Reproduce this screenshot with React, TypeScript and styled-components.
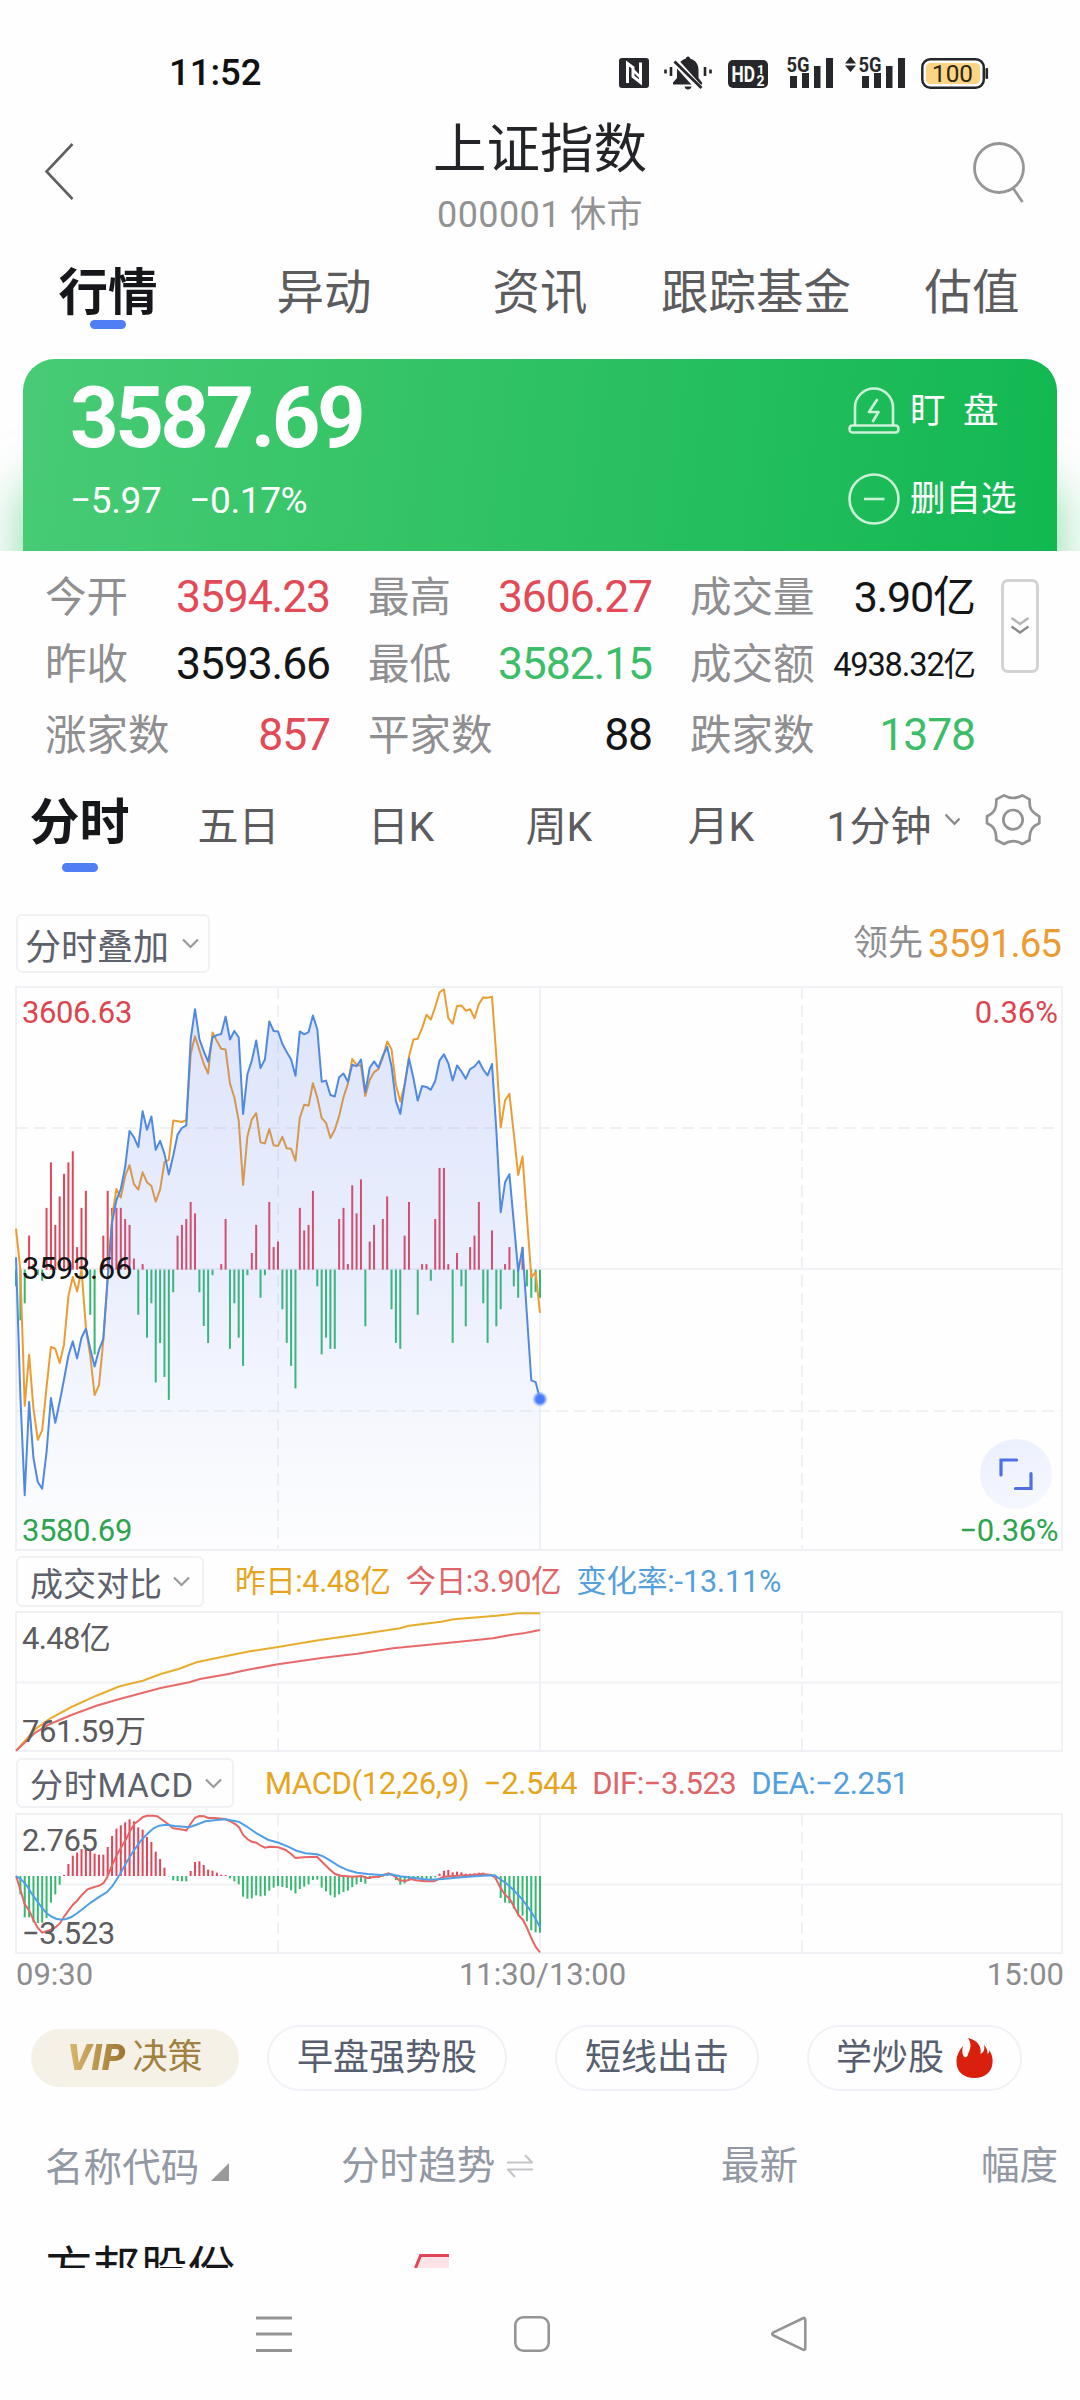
import React from "react";
import styled, { createGlobalStyle } from "styled-components";

const Global = createGlobalStyle`
  *, *::before, *::after { box-sizing: border-box; }
  html, body { margin: 0; padding: 0; background: #fefefe; }
  body { font-family: Roboto, "Noto Sans CJK SC", sans-serif; -webkit-font-smoothing: antialiased; }
  svg { display: block; flex: none; }
`;

const Screen = styled.main`
  width: 1080px;
  height: 2400px;
  overflow: hidden;
  display: flex;
  flex-direction: column;
  background: #fefefe;
  color: #16171a;
  > * { flex-shrink: 0; }
`;

const Txt = styled.span<{ $s: number; $c?: string; $w?: number; $ls?: number }>`
  font-size: ${(p) => p.$s}px;
  color: ${(p) => p.$c ?? "inherit"};
  font-weight: ${(p) => p.$w ?? 400};
  letter-spacing: ${(p) => p.$ls ?? 0}px;
  white-space: pre;
  line-height: 1.2;
`;

/* ---------- status bar ---------- */

const StatusBar = styled.header`
  height: 112px;
  padding: 33px 90px 0 169px;
  display: flex;
  align-items: center;
  justify-content: space-between;
  line-height: 1;
`;

const StatusIcons = styled.div`
  width: 371px;
  height: 46px;
`;

/* ---------- title ---------- */

const TitleBar = styled.div`
  height: 132px;
  padding: 0 55px;
  display: grid;
  grid-template-columns: 52px 1fr 52px;
`;

const TitleText = styled.div`
  display: flex;
  flex-direction: column;
  align-items: center;
`;

const TitleName = styled.h1`
  margin: 7px 0 0;
  font-size: 53.5px;
  line-height: 62px;
  font-weight: 400;
  color: #232427;
`;

const TitleSub = styled.div`
  margin-top: 12px;
  font-size: 36px;
  line-height: 44px;
  letter-spacing: 0.4px;
  color: #929292;
`;

const BackBox = styled.div`
  margin-left: -11px;
  padding-top: 30px;
`;
const SearchBox = styled.div`padding-top: 28px;`;

/* ---------- tabs ---------- */

const MainTabs = styled.nav`
  height: 115px;
  padding: 21px 0 0;
  display: grid;
  grid-template-columns: repeat(5, 1fr);
`;

const Tab = styled.div<{ $active?: boolean }>`
  display: flex;
  flex-direction: column;
  align-items: center;
  font-size: ${(p) => (p.$active ? 49.5 : 47.5)}px;
  line-height: 56px;
  font-weight: ${(p) => (p.$active ? 700 : 400)};
  color: ${(p) => (p.$active ? "#16171a" : "#5c5c5e")};
  white-space: nowrap;
`;

const Indicator = styled.i<{ $gap: number }>`
  width: 36px;
  height: 9px;
  margin-top: ${(p) => p.$gap}px;
  border-radius: 5px;
  background: #4f7ef5;
`;

/* ---------- price card ---------- */

const CardWrap = styled.section`
  height: 192px;
  padding: 0 23px;
  overflow: hidden;
`;

const Card = styled.div`
  height: 194px;
  padding: 0 40px 0 47px;
  border-radius: 32px 32px 0 0;
  background: linear-gradient(97deg, #48cb76 0%, #38c568 30%, #27bf60 62%, #12b851 100%);
  box-shadow: 0 120px 50px rgba(32, 190, 90, 0.55);
  display: flex;
  justify-content: space-between;
  color: #fff;
`;

const PriceCol = styled.div`
  display: flex;
  flex-direction: column;
`;

const Price = styled.div`
  margin-top: 10px;
  font-size: 85px;
  line-height: 98px;
  font-weight: 700;
  letter-spacing: -3.6px;
`;

const Change = styled.div`
  margin-top: 12px;
  display: flex;
  gap: 28px;
  font-size: 37px;
  line-height: 44px;
  letter-spacing: -0.4px;
`;

const Actions = styled.div`
  width: 169px;
  padding-top: 27px;
  display: flex;
  flex-direction: column;
  gap: 38px;
`;

const Action = styled.div`
  display: flex;
  align-items: center;
  gap: 10px;
  height: 50px;
  font-size: 35.5px;
  line-height: 50px;
  white-space: pre;
`;

/* ---------- statistics ---------- */

const Stats = styled.section`
  height: 231px;
  padding: 25px 41px 0 45px;
  display: flex;
  gap: 25px;
`;

const StatGrid = styled.div`
  width: 931px;
  display: grid;
  grid-template-columns: 285px 284px 285px;
  grid-template-rows: 44px 44px 44px;
  column-gap: 38px;
  row-gap: 23px;
`;

const Stat = styled.div<{ $down?: number }>`
  display: flex;
  justify-content: space-between;
  align-items: center;
  padding-top: ${(p) => p.$down ?? 0}px;
`;

const ExpandButton = styled.button`
  width: 38px;
  height: 94px;
  margin-top: 3px;
  padding: 0;
  border: 3px solid #d2d2d2;
  border-radius: 7px;
  background: #fefefe;
  display: flex;
  align-items: center;
  justify-content: center;
`;

/* ---------- period tabs ---------- */

const PeriodTabs = styled.nav`
  height: 132px;
  padding-top: 11px;
  display: grid;
  grid-template-columns: 159px 159px 166px 150px 174px 137px 26px 1fr;
`;

const Period = styled.div<{ $active?: boolean; $pl?: number }>`
  display: flex;
  flex-direction: column;
  align-items: center;
  padding-top: ${(p) => (p.$active ? 0 : 4)}px;
  padding-left: ${(p) => p.$pl ?? 0}px;
  font-size: ${(p) => (p.$active ? 50 : 41)}px;
  line-height: 60px;
  font-weight: ${(p) => (p.$active ? 700 : 400)};
  color: ${(p) => (p.$active ? "#16171a" : "#5c5c5e")};
  white-space: nowrap;
`;

const PeriodChevron = styled.div`padding-top: 20px;`;
const GearBox = styled.div`padding: 0 0 0 14px;`;

/* ---------- chart panels ---------- */

const PanelHead = styled.div<{ $h: number; $pad?: number }>`
  height: ${(p) => p.$h}px;
  padding: ${(p) => p.$pad ?? 0}px 19px 0 16px;
  display: flex;
  align-items: flex-start;
`;

const Select = styled.div<{ $w: number; $h: number; $pl: number; $fs: number; $gap: number; $ls?: number }>`
  width: ${(p) => p.$w}px;
  height: ${(p) => p.$h}px;
  padding-left: ${(p) => p.$pl}px;
  display: flex;
  align-items: center;
  gap: ${(p) => p.$gap}px;
  border: 2px solid #eff1f4;
  border-radius: 6px;
  font-size: ${(p) => p.$fs}px;
  letter-spacing: ${(p) => p.$ls ?? 0}px;
  color: #5d616b;
  white-space: nowrap;
`;

const Legend = styled.div<{ $ml: number; $gap: number }>`
  margin-left: ${(p) => p.$ml}px;
  height: 52px;
  display: flex;
  align-items: center;
  gap: ${(p) => p.$gap}px;
`;

const Lead = styled.div`
  margin-left: auto;
  height: 60px;
  display: flex;
  align-items: center;
  gap: 5px;
`;

const ChartBox = styled.div<{ $h: number }>`
  position: relative;
  width: 1080px;
  height: ${(p) => p.$h}px;
`;

const AxisLabel = styled.span<{ $y: number; $right?: boolean; $c: string; $ls?: number }>`
  position: absolute;
  top: ${(p) => p.$y - 20}px;
  ${(p) => (p.$right ? "right: 22px;" : "left: 22px;")}
  line-height: 40px;
  font-size: 31px;
  letter-spacing: ${(p) => p.$ls ?? -0.4}px;
  color: ${(p) => p.$c};
  white-space: nowrap;
`;

const FullscreenButton = styled.div`
  position: absolute;
  right: 28px;
  top: 453px;
  width: 72px;
  height: 70px;
  border-radius: 50%;
  background: linear-gradient(160deg, #eaeffd, #f7f9ff);
  display: flex;
  align-items: center;
  justify-content: center;
`;

const TimeAxis = styled.div`
  height: 66px;
  padding: 3px 16px 0 16px;
  display: grid;
  grid-template-columns: 1fr auto 1fr;
  font-size: 31px;
  line-height: 36px;
  color: #8d8d8f;
  > :nth-child(2) { padding-left: 5px; }
  > :last-child { text-align: right; }
`;

/* ---------- chips ---------- */

const Chips = styled.div`
  height: 76px;
  padding-left: 31px;
  display: flex;
  align-items: center;
`;

const Chip = styled.div<{ $w: number; $ml: number }>`
  width: ${(p) => p.$w}px;
  height: 66px;
  margin-left: ${(p) => p.$ml}px;
  border: 2px solid #f0f2f8;
  border-radius: 33px;
  display: flex;
  align-items: center;
  justify-content: center;
  gap: 12px;
  font-size: 36px;
  line-height: 60px;
  color: #565e6f;
  white-space: nowrap;
`;

const VipChip = styled.div`
  width: 208px;
  height: 58px;
  border-radius: 29px;
  background: #f5f1e6;
  display: flex;
  align-items: center;
  justify-content: center;
  gap: 5px;
  font-size: 35px;
  line-height: 58px;
  color: #a1813f;
`;

const VipMark = styled.b`
  font-size: 37px;
  font-style: italic;
  font-weight: 900;
  padding-right: 2px;
  background: linear-gradient(90deg, #d9b870, #9a7430);
  -webkit-background-clip: text;
  background-clip: text;
  color: transparent;
`;

/* ---------- stock table ---------- */

const TableHead = styled.div`
  height: 142px;
  padding-top: 42px;
  display: grid;
  grid-template-columns: 296px 380px 260px 1fr;
  padding-left: 45px;
  font-size: 38.6px;
  line-height: 56px;
  color: #9399a4;
`;

const HeadCell = styled.div<{ $dy?: number }>`
  display: flex;
  align-items: center;
  height: 56px;
  gap: 12px;
  padding-top: ${(p) => p.$dy ?? 0}px;
`;

const ClippedRow = styled.div`
  height: 30px;
  overflow: hidden;
  padding-left: 45px;
  display: flex;
  gap: 179px;
  font-size: 47.5px;
  line-height: 64px;
  color: #16171a;
`;

const NavBar = styled.footer`
  height: 132px;
  padding: 48px 273px 0 256px;
  display: flex;
  justify-content: space-between;
`;

/* ---------- chart data ---------- */

const STEP = 524 / 120;
const LEFT = 16;
const GRID = "#eff1f4";

const price = [775,1150,1418,1166,1318,1382,1400,1300,1155,1222,1165,1105,1040,1002,1048,992,968,1022,1070,1025,995,830,680,620,590,530,433,450,477,380,430,394,484,460,495,551,500,443,425,418,185,104,185,218,246,180,174,171,124,186,163,180,387,280,243,189,263,240,137,163,164,198,220,240,284,164,172,166,121,158,300,297,336,340,288,278,300,254,258,240,328,262,245,262,230,206,258,352,387,310,237,290,351,312,314,322,298,242,226,250,297,256,272,292,266,259,244,267,283,252,430,653,572,550,680,812,749,930,1107,1112,1158];
const lead = [697,810,1176,1038,1185,1268,1242,1125,1017,1022,1060,1010,880,828,867,808,965,1040,1147,1120,1000,830,665,590,613,555,525,577,592,545,572,582,624,592,517,511,405,407,409,404,225,177,215,252,278,167,190,211,213,305,342,405,579,448,402,385,464,467,428,472,474,449,480,481,514,398,362,365,304,343,398,411,452,430,393,342,305,239,254,257,339,295,274,266,235,191,212,308,354,308,232,186,184,155,119,132,98,58,50,128,143,95,94,108,104,128,90,72,73,70,230,424,350,333,440,552,502,665,828,815,925];
const force = [853,945,899,716,793,822,838,641,518,687,610,549,518,488,747,641,595,930,1037,808,716,595,641,641,641,671,687,778,930,793,992,899,1113,1006,1098,1160,869,716,687,671,625,656,869,960,1006,823,808,793,671,1022,899,992,1068,823,763,687,884,823,625,747,732,915,1006,1068,1129,641,702,687,595,853,1037,992,1022,1022,671,641,793,580,656,564,961,732,687,808,671,610,915,1006,1022,716,625,808,930,793,793,838,671,533,533,793,1006,763,853,961,747,716,625,899,1006,702,961,915,793,747,853,884,747,853,884,869,884];
const macd = [379,434,503,503,518,520,519,505,459,434,405,376,343,318,309,298,298,303,312,315,315,292,259,237,227,218,209,215,233,240,262,277,306,328,354,380,392,394,395,395,364,337,335,346,360,363,369,375,376,386,395,404,441,447,446,437,440,438,423,414,409,412,415,422,431,418,411,404,391,390,414,425,437,443,434,427,423,412,404,397,402,388,383,385,381,377,378,391,405,401,393,388,387,388,392,392,383,372,363,361,368,366,368,372,372,371,369,369,373,376,390,445,459,461,477,497,498,515,542,548,549];

const volPrev = [[45,633],[100,567],[140,537],[200,502],[270,468],[335,440],[400,423],[450,403],[500,388],[550,368],[620,352],[700,335],[778,322],[900,300],[1000,285],[1120,266],[1145,258],[1235,246],[1270,239],[1390,228],[1450,221],[1512,221]];
const volNow = [[45,633],[100,578],[140,553],[200,526],[270,498],[335,478],[450,445],[530,428],[560,418],[640,403],[690,391],[778,374],[900,355],[1000,342],[1100,326],[1200,315],[1300,305],[1380,296],[1430,286],[1470,280],[1512,271]];
const dif = [[45,379],[57,420],[69,463],[82,483],[94,512],[106,535],[118,549],[130,545],[143,539],[155,533],[167,522],[180,500],[192,482],[204,465],[216,453],[230,435],[245,419],[262,413],[278,408],[290,400],[300,383],[312,352],[326,318],[340,292],[352,270],[364,245],[376,223],[388,213],[400,202],[412,198],[430,198],[440,200],[455,211],[470,223],[485,236],[500,238],[512,240],[522,242],[534,222],[546,204],[558,199],[572,200],[583,205],[600,205],[630,208],[645,215],[660,224],[670,234],[681,256],[693,269],[705,276],[718,279],[730,288],[742,294],[754,291],[779,293],[800,301],[815,313],[827,325],[850,323],[888,321],[905,340],[922,358],[938,373],[955,378],[990,381],[1012,379],[1030,386],[1045,382],[1060,381],[1088,371],[1105,379],[1118,392],[1135,394],[1150,388],[1165,392],[1190,395],[1215,395],[1240,382],[1270,379],[1320,376],[1350,373],[1375,376],[1388,386],[1400,412],[1414,435],[1427,447],[1440,473],[1452,497],[1464,510],[1476,535],[1488,566],[1500,592],[1512,608]];
const dea = [[45,379],[60,390],[75,408],[90,434],[105,456],[118,475],[130,490],[143,500],[157,507],[172,510],[185,508],[200,502],[216,491],[235,475],[255,458],[280,440],[300,427],[315,409],[335,375],[355,336],[375,302],[395,272],[415,250],[430,236],[445,228],[465,225],[490,229],[530,233],[550,225],[575,215],[600,212],[630,209],[668,216],[690,230],[720,252],[750,270],[780,279],[805,290],[830,303],[855,311],[888,314],[905,320],[925,333],[950,350],[975,362],[1000,369],[1030,373],[1065,376],[1095,374],[1120,380],[1160,385],[1200,390],[1240,388],[1300,382],[1350,378],[1385,377],[1400,388],[1420,403],[1440,423],[1460,446],[1480,475],[1500,508],[1512,532]];

const px = (i: number) => LEFT + i * STEP;
const mainY = (v: number) => (v - 44) / 2.703 + 1;
const toPoints = (ys: number[]) => ys.map((v, i) => `${px(i).toFixed(1)},${mainY(v).toFixed(1)}`).join(" ");
const subPoints = (pts: number[][], top: number) =>
  pts.map(([x, y]) => `${(x / 2.8).toFixed(1)},${((y - top) / 3 + 1).toFixed(1)}`).join(" ");

const ChartGrid = ({ h, mid, main }: { h: number; mid: number; main?: boolean }) => (
  <g stroke={GRID} strokeWidth={2} fill="none">
    <rect x={16} y={1} width={1046} height={h - 2} />
    <path d={`M16 ${mid}H1062M540 1V${h - 1}`} />
    <path d={`M278 1V${h - 1}M802 1V${h - 1}`} strokeDasharray="12 6" />
    {main && <path d={`M16 142H1062M16 425H1062`} strokeDasharray="12 6" />}
  </g>
);

const MainChart = () => {
  const line = toPoints(price);
  const zero = mainY(808);
  return (
    <svg width="1080" height="566" viewBox="0 0 1080 566" fill="none">
      <defs>
        <linearGradient id="area" x1="0" y1="0" x2="0" y2="1">
          <stop offset="0" stopColor="#5b7ff0" stopOpacity="0.2" />
          <stop offset="0.5" stopColor="#6b8cf5" stopOpacity="0.13" />
          <stop offset="1" stopColor="#8aa8ff" stopOpacity="0.01" />
        </linearGradient>
        <radialGradient id="dot">
          <stop offset="0" stopColor="#4274fa" />
          <stop offset="0.55" stopColor="#4f7dfa" />
          <stop offset="1" stopColor="#7c9dff" stopOpacity="0.15" />
        </radialGradient>
      </defs>
      <ChartGrid h={565} mid={283} main />
      {force.map((v, i) =>
        v === 808 ? null : (
          <rect key={i} x={px(i) - 1} width={2} y={Math.min(zero, mainY(v))} height={Math.abs(mainY(v) - zero)} fill={v < 808 ? "#e0465a" : "#36b871"} />
        )
      )}
      <polyline points={toPoints(lead)} stroke="#eb9c33" strokeWidth={2} strokeLinejoin="round" />
      <polygon points={`${LEFT},564 ${line} 540,564`} fill="url(#area)" />
      <polyline points={line} stroke="#5089e0" strokeWidth={2} strokeLinejoin="round" />
      <circle cx="540" cy={mainY(1158)} r="7.5" fill="url(#dot)" />
    </svg>
  );
};

const VolumeChart = () => (
  <svg width="1080" height="141" viewBox="0 0 1080 141" fill="none">
    <ChartGrid h={141} mid={71.5} />
    <polyline points={subPoints(volPrev, 217)} stroke="#e6ae2c" strokeWidth={2} />
    <polyline points={subPoints(volNow, 217)} stroke="#e86a6a" strokeWidth={2} />
  </svg>
);

const MacdChart = () => (
  <svg width="1080" height="141" viewBox="0 0 1080 141" fill="none">
    <ChartGrid h={141} mid={71.5} />
    {macd.map((v, i) => {
      const y = (v - 193) / 3 + 1;
      return <rect key={i} x={px(i) - 1} width={2} y={Math.min(63, y)} height={Math.abs(y - 63)} fill={v < 379 ? "#e0465a" : "#36b871"} />;
    })}
    <polyline points={subPoints(dif, 193)} stroke="#ea6464" strokeWidth={2} />
    <polyline points={subPoints(dea, 193)} stroke="#4f9fe6" strokeWidth={2} />
  </svg>
);

/* ---------- icons ---------- */

const StatusGlyphs = () => (
  <svg width="371" height="46" viewBox="620 49 371 46" fill="#26272a">
    <rect x="620" y="57" width="30" height="30" rx="3" />
    <path d="M628.500 82V62.500L634 66.500V75.500L641.500 81.500V61.500" fill="none" stroke="#fefefe" strokeWidth="3" />
    <path d="M634 69L642 77" stroke="#fefefe" strokeWidth="2.500" />
    <path d="M689 55.500c1.500 0 2 1 2 2 5.500 1.500 8.500 6 8.500 11.500v8l3.500 4.500v2h-29v-2l4-4.500v-8c0-5 3.500-10 9-11.500 0-1 .5-2 2-2zM685.500 85.500h7c-.5 2-1.500 2.900-3.500 2.900s-3-.9-3.500-2.900z" />
    <path d="M675 59L701 88" stroke="#fefefe" strokeWidth="7" />
    <path d="M675.500 60.500L702.500 87" stroke="#26272a" strokeWidth="2.800" />
    <path d="M666.500 68.500v4M672 66v9M706 66v9M711.500 68.500v4" stroke="#26272a" strokeWidth="2.600" />
    <rect x="729" y="59" width="40" height="28" rx="5" />
    <text x="732.500" y="81" fontSize="22" fontWeight="700" fill="#fefefe" textLength="23.500" lengthAdjust="spacingAndGlyphs">HD</text>
    <text x="758" y="73" fontSize="13" fontWeight="700" fill="#fefefe">1</text>
    <text x="757.500" y="84.500" fontSize="14" fontWeight="700" fill="#fefefe">2</text>
    <text x="787.500" y="70.500" fontSize="21" fontWeight="700" textLength="23" lengthAdjust="spacingAndGlyphs">5G</text>
    <path d="M791 75h7v12h-7zM803 72h7v15h-7zM815 65h6.500v22H815zM827 57h7v30h-7z" />
    <path d="M846 62.500L851.500 55.500L857 62.500zM846 64.500L851.500 71L857 64.500z" />
    <text x="859.500" y="70.500" fontSize="21" fontWeight="700" textLength="23" lengthAdjust="spacingAndGlyphs">5G</text>
    <path d="M863 75h7v12h-7zM875 72h7v15h-7zM887 65h6.500v22H887zM899 57h7v30h-7z" />
    <rect x="923.300" y="58.300" width="61.500" height="28.500" rx="8" fill="#fefefe" stroke="#26272a" strokeWidth="2.500" />
    <rect x="927" y="62" width="54" height="21" rx="4.500" fill="#fbd583" />
    <text x="933" y="81" fontSize="23.500" textLength="41" lengthAdjust="spacingAndGlyphs" fill="#2b2413">100</text>
    <rect x="986.500" y="67" width="2.600" height="11" rx="1" />
  </svg>
);

const BackIcon = () => (
  <svg width="32" height="60" viewBox="0 0 32 60" fill="none" stroke="#5f5f61" strokeWidth="2.600">
    <path d="M28.500 2L2.500 29.500L28.500 57" />
  </svg>
);

const SearchIcon = () => (
  <svg width="52" height="64" viewBox="0 0 52 64" fill="none" stroke="#969696" strokeWidth="2.800">
    <circle cx="26" cy="28" r="24.500" />
    <path d="M40 48L49.500 62" />
  </svg>
);

const BellIcon = () => (
  <svg width="52" height="48" viewBox="0 0 52 48" fill="none" stroke="#e9faef" strokeOpacity="0.85" strokeWidth="2.600" strokeLinejoin="round">
    <path d="M7 38.500V20.500a19 19 0 0 1 38 0V38.500" />
    <path d="M4.500 38.500h43c2 0 3 1.500 3 3.500s-1 3.500-3 3.500h-43c-2 0-3-1.500-3-3.500s1-3.500 3-3.500z" />
    <path d="M29.500 12L21 25h9.500L24.500 35" />
  </svg>
);

const MinusIcon = () => (
  <svg width="52" height="52" viewBox="0 0 52 52" fill="none" stroke="#e9faef" strokeOpacity="0.85" strokeWidth="2.600">
    <circle cx="26" cy="26" r="24.500" />
    <path d="M16 26H36.500" />
  </svg>
);

const DoubleChevron = () => (
  <svg width="20" height="20" viewBox="0 0 20 20" fill="none" strokeWidth="2.400">
    <path d="M1.500 2L10 8L18.500 2" stroke="#b5b5b5" />
    <path d="M1.500 10.500L10 16.500L18.500 10.500" stroke="#8a8a8a" />
  </svg>
);

const Chevron = ({ w = 17 }: { w?: number }) => (
  <svg width={w} height="11" viewBox="0 0 17 11" fill="none" stroke="#9a9a9c" strokeWidth="2.200">
    <path d="M1 1.500L8.500 9L16 1.500" />
  </svg>
);

const CutChevron = () => (
  <svg width="15" height="13" viewBox="0 0 15 13" fill="none" stroke="#8a8a8c" strokeWidth="2.400">
    <path d="M0.500 1.500L9.500 10.800L14.500 5.500" />
  </svg>
);

const GearIcon = () => (
  <svg width="56" height="53" viewBox="165 37 168 159" fill="none" stroke="#929294" strokeWidth="8" strokeLinejoin="round">
    <path d="M222 44Q249 60 277 44L299 56C297 82 303 94 328 107V128C303 138 297 155 299 178L277 190Q249 173 222 190L199 178C199 155 195 138 171 128V107C195 96 200 82 199 56Z" />
    <circle cx="249" cy="117" r="29" />
  </svg>
);

const FireIcon = () => (
  <svg width="37" height="40" viewBox="0 0 37 40" fill="#d9200d">
    <path d="M12 0C21 2 26 8 24.500 16C28 14.500 29 11 28 7C31 10 31.500 13 31.500 16C33 15 33.500 13.500 33 12C36 16 37 20 36.500 25C36 34 28.500 40 18.500 40C8 40 .5 34 .5 24C.5 17 3.500 12 7 8C6 12 6 15 7.500 18C9 20.500 12 19 12 16C14.500 11 16 6 12 0Z" />
  </svg>
);

const FullscreenIcon = () => (
  <svg width="34" height="33" viewBox="0 0 34 33" fill="none" stroke="#4e70e2" strokeWidth="3.200" strokeLinecap="round">
    <path d="M2 17V2H17.500M32 15.500V30.500H16.500" />
  </svg>
);

const Sparkline = () => (
  <svg width="36" height="30" viewBox="0 0 36 30" fill="none">
    <path d="M1 30L6.500 17.500H35V30Z" fill="#fde3e6" />
    <path d="M1.500 30L6.500 17.500H35" stroke="#e04558" strokeWidth="3" />
  </svg>
);

/* ---------- data ---------- */

const RED = "#e34a57";
const GREEN = "#3dbd69";
const BLACK = "#141517";

const stats: { label: string; value: string; color: string; size?: number }[] = [
  { label: "今开", value: "3594.23", color: RED },
  { label: "最高", value: "3606.27", color: RED },
  { label: "成交量", value: "3.90亿", color: BLACK, size: 43 },
  { label: "昨收", value: "3593.66", color: BLACK },
  { label: "最低", value: "3582.15", color: GREEN },
  { label: "成交额", value: "4938.32亿", color: BLACK, size: 32.5 },
  { label: "涨家数", value: "857", color: RED },
  { label: "平家数", value: "88", color: BLACK },
  { label: "跌家数", value: "1378", color: GREEN },
];

export default function App() {
  return (
    <>
      <Global />
      <Screen>
        <StatusBar>
          <Txt $s={36.5} $w={500} $c="#111">11:52</Txt>
          <StatusIcons><StatusGlyphs /></StatusIcons>
        </StatusBar>

        <TitleBar>
          <BackBox><BackIcon /></BackBox>
          <TitleText>
            <TitleName>上证指数</TitleName>
            <TitleSub>000001 休市</TitleSub>
          </TitleText>
          <SearchBox><SearchIcon /></SearchBox>
        </TitleBar>

        <MainTabs>
          <Tab $active>行情<Indicator $gap={-1} /></Tab>
          <Tab>异动</Tab>
          <Tab>资讯</Tab>
          <Tab>跟踪基金</Tab>
          <Tab>估值</Tab>
        </MainTabs>

        <CardWrap>
          <Card>
            <PriceCol>
              <Price>3587.69</Price>
              <Change><span>−5.97</span><span>−0.17%</span></Change>
            </PriceCol>
            <Actions>
              <Action><BellIcon />盯  盘</Action>
              <Action><MinusIcon />删自选</Action>
            </Actions>
          </Card>
        </CardWrap>

        <Stats>
          <StatGrid>
            {stats.map((s, i) => (
              <Stat key={s.label} $down={i > 5 ? 8 : 0}>
                <Txt $s={41.5} $c="#8f8f91">{s.label}</Txt>
                <Txt $s={s.size ?? 44.5} $c={s.color} $ls={-1.1}>{s.value}</Txt>
              </Stat>
            ))}
          </StatGrid>
          <ExpandButton><DoubleChevron /></ExpandButton>
        </Stats>

        <PeriodTabs>
          <Period $active>分时<Indicator $gap={10} /></Period>
          <Period>五日</Period>
          <Period>日K</Period>
          <Period>周K</Period>
          <Period>月K</Period>
          <Period $pl={5}>1分钟</Period>
          <PeriodChevron><CutChevron /></PeriodChevron>
          <GearBox><GearIcon /></GearBox>
        </PeriodTabs>

        <PanelHead $h={72}>
          <Select $w={194} $h={59} $pl={7} $fs={36} $gap={13}>分时叠加<Chevron /></Select>
          <Lead>
            <Txt $s={35} $c="#8f8f91">领先</Txt>
            <Txt $s={38.5} $c="#eb9c33" $ls={-1}>3591.65</Txt>
          </Lead>
        </PanelHead>

        <ChartBox $h={566}>
          <MainChart />
          <AxisLabel $y={27} $c="#dc4550">3606.63</AxisLabel>
          <AxisLabel $y={283} $c="#141517">3593.66</AxisLabel>
          <AxisLabel $y={545} $c="#2ea350">3580.69</AxisLabel>
          <AxisLabel $y={27} $c="#dc4550" $right $ls={0}>0.36%</AxisLabel>
          <AxisLabel $y={545} $c="#2ea350" $right>−0.36%</AxisLabel>
          <FullscreenButton><FullscreenIcon /></FullscreenButton>
        </ChartBox>

        <PanelHead $h={59} $pad={4}>
          <Select $w={188} $h={51} $pl={12} $fs={33} $gap={11}>成交对比<Chevron /></Select>
          <Legend $ml={31} $gap={15}>
            <Txt $s={30.5} $ls={-0.35} $c="#e6a51f">昨日:4.48亿</Txt>
            <Txt $s={30.5} $ls={-0.35} $c="#df6468">今日:3.90亿</Txt>
            <Txt $s={30.5} $ls={-0.1} $c="#559fdd">变化率:-13.11%</Txt>
          </Legend>
        </PanelHead>
        <ChartBox $h={141}>
          <VolumeChart />
          <AxisLabel $y={28} $c="#5c5c5e" $ls={-0.7}>4.48亿</AxisLabel>
          <AxisLabel $y={121} $c="#5c5c5e">761.59万</AxisLabel>
        </ChartBox>

        <PanelHead $h={61} $pad={6}>
          <Select $w={218} $h={50} $pl={12} $fs={33} $gap={11} $ls={0.7}>分时MACD<Chevron /></Select>
          <Legend $ml={31} $gap={15}>
            <Txt $s={31} $ls={-0.35} $c="#e6a51f">MACD(12,26,9)  −2.544</Txt>
            <Txt $s={31} $ls={-0.5} $c="#df6468">DIF:−3.523</Txt>
            <Txt $s={31} $ls={-0.4} $c="#559fdd">DEA:−2.251</Txt>
          </Legend>
        </PanelHead>
        <ChartBox $h={141}>
          <MacdChart />
          <AxisLabel $y={28} $c="#5c5c5e" $ls={-0.5}>2.765</AxisLabel>
          <AxisLabel $y={121} $c="#5c5c5e" $ls={-0.5}>−3.523</AxisLabel>
        </ChartBox>
        <TimeAxis>
          <span>09:30</span>
          <span>11:30/13:00</span>
          <span>15:00</span>
        </TimeAxis>

        <Chips>
          <VipChip><VipMark>VIP</VipMark>决策</VipChip>
          <Chip $w={240} $ml={28}>早盘强势股</Chip>
          <Chip $w={204} $ml={48}>短线出击</Chip>
          <Chip $w={215} $ml={48}>学炒股<FireIcon /></Chip>
        </Chips>

        <TableHead>
          <HeadCell $dy={3}>
            名称代码
            <svg width="18" height="18" viewBox="0 0 18 18" style={{ marginTop: 8 }}><path d="M18 0V18H0Z" fill="#98999b" /></svg>
          </HeadCell>
          <HeadCell>
            分时趋势
            <svg width="26" height="24" viewBox="0 0 26 24" fill="none" stroke="#c4c6ca" strokeWidth="2.200"><path d="M0 8.500H25L18 1M26 15.500H1L8 23" /></svg>
          </HeadCell>
          <HeadCell>最新</HeadCell>
          <HeadCell>幅度</HeadCell>
        </TableHead>

        <ClippedRow>方邦股份<Sparkline /></ClippedRow>

        <NavBar>
          <svg width="36" height="37" viewBox="0 0 36 37" stroke="#949494" strokeWidth="3"><path d="M0 2H36M0 18H36M0 34.500H36" /></svg>
          <svg width="36" height="37" viewBox="0 0 36 37" fill="none" stroke="#949494" strokeWidth="2.600"><rect x="1.300" y="1.300" width="33.400" height="33.400" rx="8" /></svg>
          <svg width="36" height="37" viewBox="0 0 36 37" fill="none" stroke="#949494" strokeWidth="2.600" strokeLinejoin="round"><path d="M31.500 2.500Q34.300 .8 34.300 4V31.500Q34.300 35 31.500 33.300L2.500 19.500Q0 18 2.500 16.300Z" /></svg>
        </NavBar>
      </Screen>
    </>
  );
}
